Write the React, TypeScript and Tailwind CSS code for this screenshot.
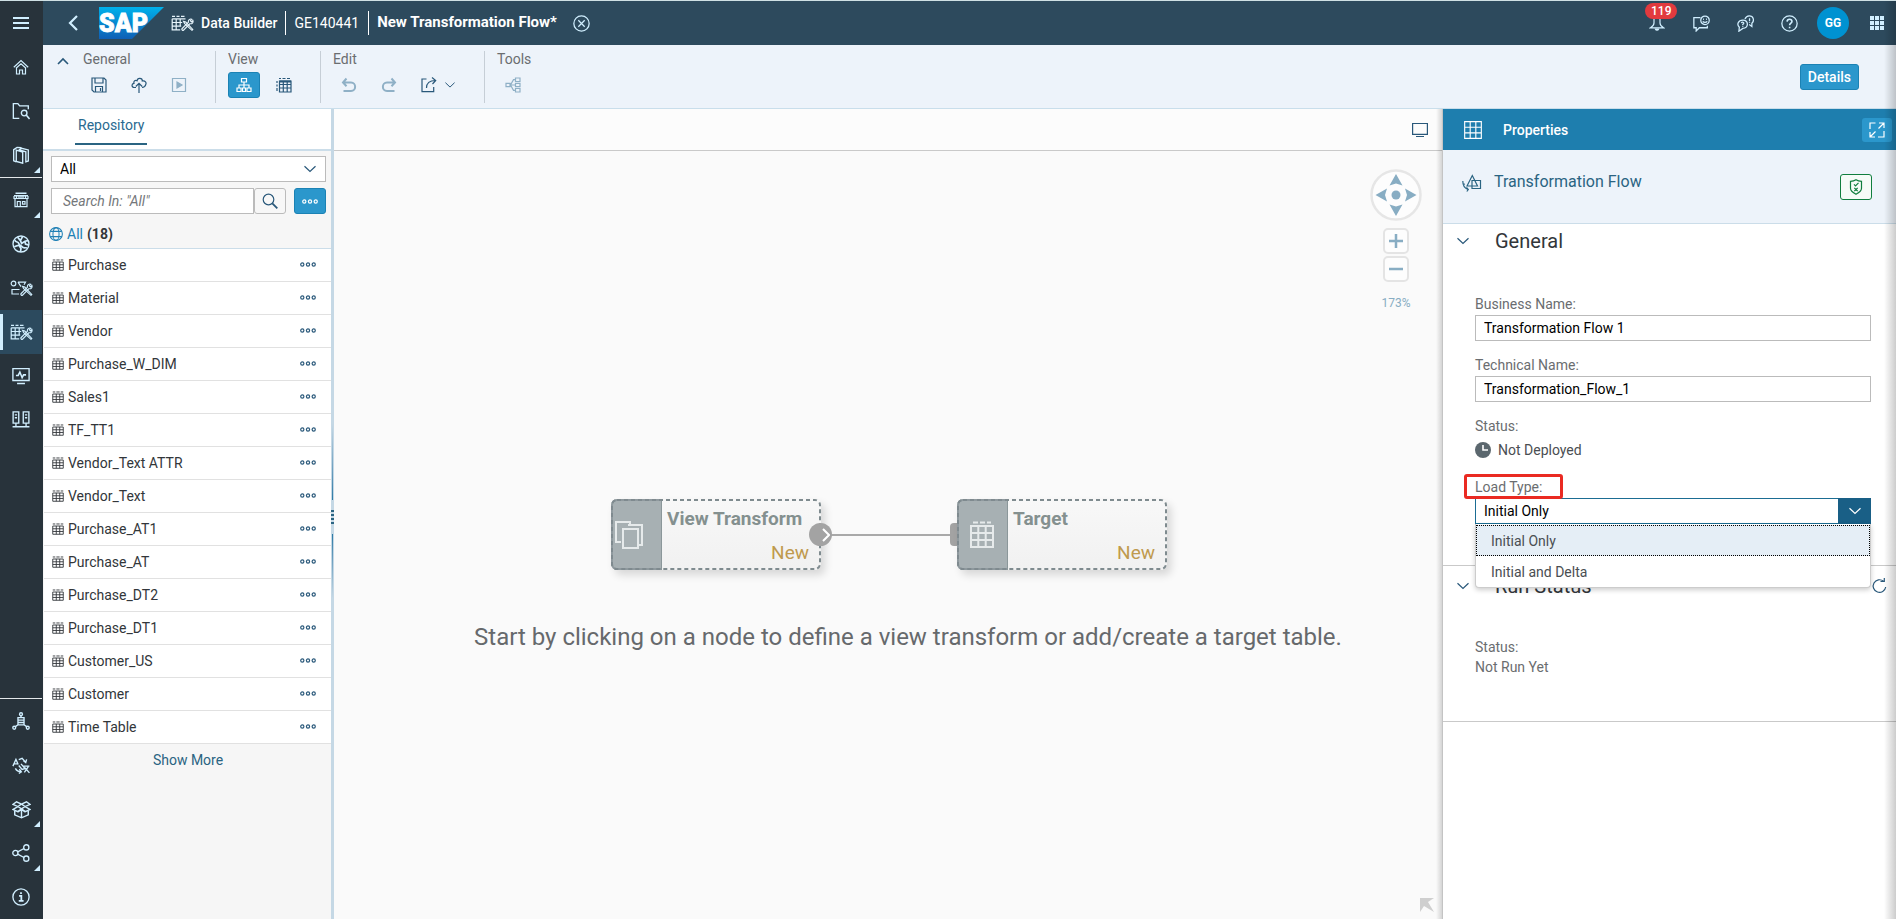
import React, { useState } from "react";

type IconProps = { className?: string; children: React.ReactNode; box?: string };

function Icon({ className = "size-4", children, box = "0 0 16 16" }: IconProps) {
  return (
    <svg
      viewBox={box}
      className={className}
      fill="none"
      stroke="currentColor"
      strokeWidth="1.2"
      aria-hidden="true"
    >
      {children}
    </svg>
  );
}

/* ---------- shared drawings ---------- */

const TableRows = () => (
  <>
    <path d="M1 1.3h3.4M5.800 1.300h4.400M11.600 1.300H15" />
    <path d="M1 4h14v11H1zM1 7.700h14M1 11.300h14M5.700 4v11M10.300 4v11" />
  </>
);

const Tools = () => (
  <>
    <path d="M12.500 6.300l1 2.200 5.300 4.800 2.200 2 .8-.8-2-2.200-5-5.300z" strokeWidth="1.100" />
    <path d="M20.800 4.300a2.400 2.400 0 0 0-3.300 2.900l-6.300 6.300a1 1 0 0 0 1.500 1.500l6.300-6.300a2.400 2.400 0 0 0 2.900-3.200l-1.400 1.400-1.200-1.200z" strokeWidth="1.100" />
  </>
);

const TableTools = () => (
  <>
    <path d="M1 1.300h3M5.500 1.300h3M10 1.300h3.500" />
    <path d="M1.200 3.800v11h8M1.200 3.800h13.300M1.200 7.500h10M1.200 11.200h9M5.200 3.800v11M9.200 3.800v7" />
    <Tools />
  </>
);

const ShapeTools = () => (
  <>
    <circle cx="3.500" cy="3.500" r="2.300" />
    <path d="M9.500 9.500H2V14h7M8 2.200h7.500l-1.500 2.500M8 2.200l3 4.500" />
    <Tools />
  </>
);

const ChevronDown = ({ className = "size-3" }: { className?: string }) => (
  <Icon className={className} box="0 0 12 12">
    <path d="M.5 3.200l5.500 5.300 5.500-5.300" />
  </Icon>
);

const Dots = () => (
  <svg viewBox="0 0 16 5" className="h-[5px] w-4" fill="none" stroke="currentColor" strokeWidth="1.200" aria-hidden="true">
    <circle cx="2.300" cy="2.500" r="1.600" />
    <circle cx="8" cy="2.500" r="1.600" />
    <circle cx="13.700" cy="2.500" r="1.600" />
  </svg>
);

/* ---------- side navigation ---------- */

type NavItem = { label: string; icon: React.ReactNode; more?: boolean; active?: boolean; line?: boolean };

const home = (
  <Icon className="size-4">
    <path d="M.8 8.200L8 1.500l7.200 6.700M3 9.200L8 4.700l5 4.500M3.500 9v6h3v-4h3v4h3V9" />
  </Icon>
);
const folderSearch = (
  <Icon className="size-[18px]">
    <path d="M6.500 14.500H1.200V1.500h4l1.600 2h7.700v3" />
    <circle cx="10.800" cy="9.800" r="2.500" />
    <path d="M12.600 11.600l3 3.400" strokeWidth="1.400" />
  </Icon>
);
const books = (
  <Icon className="size-[18px]">
    <path d="M3.800 14l-2.300-.8V3.200L4.500 1.200l4 .3M3.800 3.700l5.700 1.800v9.800l-5.700-1.600zM6 3.700l2.500-1.700 6 1.500v9.800l-2.200.8V5.200L6.500 3.500" />
  </Icon>
);
const shop = (
  <Icon className="size-4">
    <path d="M2.500 1.200h11M1 3.800h14" strokeWidth="1.500" />
    <path d="M1 4v2.500h2.500V4v2.500H6V4v2.500h2V4v2.500h2V4v2.500h2.500V4v2.500H15V4M2 7v7.700h12V7M4.300 14V9.500h3V14M9.500 9.500H12v2.600H9.500z" />
  </Icon>
);
const globe = (
  <Icon className="size-[18px]">
    <circle cx="8" cy="8" r="7.100" />
    <path d="M2.500 4.500c1 2.500 3 1 3.500 3s2 1.500 3 3 3 .5 4.500 1M5 2l2.500 3M9.500 1.200L7.500 5l1 2.500 3-2 2.800-.5M2 10.500l4-1.500 2 3-.5 3M11.500 5.500l.5 2.500 3 1" strokeWidth="1.500" />
  </Icon>
);
const monitorPulse = (
  <Icon className="size-[18px]">
    <path d="M.8 1.500h14.400v10.500H.8zM4.500 14.700h7" />
    <path d="M3.500 7.500h2l1.500-3 2 5 1.300-2.500h2.200" strokeWidth="1.400" />
  </Icon>
);
const servers = (
  <Icon className="size-[18px]">
    <path d="M1 .8h5v10H1zM10 .8h5v10h-5zM3.500 11v3.500M12.500 11v3.500M.5 14h15" />
    <path d="M2.500 3.500h2M2.500 6h2M11.500 3.500h2M11.500 6h2" />
  </Icon>
);
const network = (
  <Icon className="size-[18px]">
    <circle cx="8" cy="2" r="1.300" />
    <circle cx="2" cy="14" r="1.300" />
    <circle cx="14" cy="14" r="1.300" />
    <path d="M8 3.300v1.500M5.300 5h5.400v6.500H5.300zM5.300 7.200h5.400M5.300 9.300h5.400M5 11.500l-2 1.500M11 11.500l2 1.500" />
  </Icon>
);
const translate = (
  <Icon className="size-[18px]">
    <path d="M.8 9L3.500 3l2 4.500M1.800 7h3M6 3.200l3-1.200 3 3.500M10 4l2.200 1.800L13 3M3 11c1 2 2.500 3 5 3M6.500 11.700L8.300 14l-2.200 1.500M6 8.500l3 3.500 3-1M8 7l4 4.500M10 9h5.500M11 14.500l3.500-5M11.500 10.500l4 4.500" />
  </Icon>
);
const box = (
  <Icon className="size-[19px]">
    <path d="M8 3.500L3.800 1.500.8 3.700 5 5.500zM8 3.500l4.200-2 3 2.200L11 5.500zM8 7.500L5 5.500.8 8l4 1.800zM8 7.500l3-2L15.200 8l-4 1.800zM2.300 9.300v3.200L8 15l5.700-2.500V9.300M8 7.500V15M5 10l3-2M11 10L8 8" />
  </Icon>
);
const share = (
  <Icon className="size-[18px]">
    <circle cx="3" cy="8" r="2.300" />
    <circle cx="12.700" cy="3" r="2.300" />
    <circle cx="12.700" cy="13" r="2.300" />
    <path d="M5 7l5.700-3M5 9l5.700 3" />
  </Icon>
);
const info = (
  <Icon className="size-[18px]">
    <circle cx="8" cy="8" r="7.200" />
    <path d="M6.300 7h2v4.500M6 11.500h4.300M8 3.700v1.700" strokeWidth="1.600" />
  </Icon>
);

const topNav: NavItem[] = [
  { label: "Home", icon: home },
  { label: "Repository Explorer", icon: folderSearch },
  { label: "Catalog", icon: books, more: true },
  { label: "Data Marketplace", icon: shop, more: true, line: true },
  { label: "Semantic Onboarding", icon: globe },
  { label: "Business Builder", icon: <Icon className="h-4 w-[23px]" box="0 0 23 16"><ShapeTools /></Icon> },
  { label: "Data Builder", icon: <Icon className="h-4 w-[23px]" box="0 0 23 16"><TableTools /></Icon>, active: true },
  { label: "Data Integration Monitor", icon: monitorPulse },
  { label: "Connections", icon: servers },
];

const bottomNav: NavItem[] = [
  { label: "Data Access", icon: network, line: true },
  { label: "Translation", icon: translate },
  { label: "Transport", icon: box, more: true },
  { label: "System", icon: share, more: true },
  { label: "About", icon: info },
];

function NavButton({ item }: { item: NavItem }) {
  return (
    <button
      type="button"
      aria-label={item.label}
      className={
        "relative flex w-full items-center justify-center " +
        (item.line ? "h-[45px] border-t border-[#e4e8ea] " : "h-11 ") +
        (item.active ? "bg-[#2c4a5e]" : "")
      }
    >
      {item.active && <span className="absolute inset-y-1 left-0 w-[3px] bg-[#d1efff]" />}
      {item.icon}
      {item.more && (
        <svg viewBox="0 0 6 6" className="absolute right-0.5 bottom-1 size-1.5" aria-hidden="true">
          <path d="M6 0v6H0z" fill="#d1efff" />
        </svg>
      )}
    </button>
  );
}

function SideNav() {
  return (
    <nav className="flex w-[43px] shrink-0 flex-col bg-[#28333b] pr-px text-[#d1efff]">
      <button type="button" aria-label="Menu" className="flex h-11 items-center justify-center">
        <svg viewBox="0 0 16 12" className="h-3 w-4" fill="currentColor" aria-hidden="true">
          <path d="M0 0h16v2H0zM0 5h16v2H0zM0 10h16v2H0z" />
        </svg>
      </button>
      {topNav.map((n) => (
        <NavButton key={n.label} item={n} />
      ))}
      <div className="mt-auto">
        {bottomNav.map((n) => (
          <NavButton key={n.label} item={n} />
        ))}
      </div>
    </nav>
  );
}

/* ---------- shell header ---------- */

function SapLogo() {
  return (
    <svg viewBox="0 0 65 32" className="h-8 w-[65px]" role="img" aria-label="SAP">
      <defs>
        <linearGradient id="sap" x1="0" y1="0" x2="0" y2="1">
          <stop offset="0" stopColor="#00b1eb" />
          <stop offset="1" stopColor="#0f5fb5" />
        </linearGradient>
      </defs>
      <path d="M0 0h65L33 32H0z" fill="url(#sap)" />
      <text x="0" y="25" fontFamily="Roboto, Arial, sans-serif" fontWeight="900" fontSize="25" fill="#fff" stroke="#fff" strokeWidth="0.8">
        SAP
      </text>
    </svg>
  );
}

function Header() {
  return (
    <header className="flex h-11 items-center bg-[#2d4a5d] pl-[25px] text-white">
      <button type="button" aria-label="Back" className="mr-[21px] text-[#d1efff]">
        <svg viewBox="0 0 10 16" className="h-4 w-2.5" fill="none" stroke="currentColor" strokeWidth="2.200" aria-hidden="true">
          <path d="M9 1L2 8l7 7" />
        </svg>
      </button>
      <SapLogo />
      <Icon className="ml-[7px] h-4 w-[23px] text-[#e6f4fb]" box="0 0 23 16">
        <TableTools />
      </Icon>
      <nav className="flex items-center text-sm font-medium whitespace-nowrap">
        <a href="#builder" className="pl-[7px]">Data Builder</a>
        <span className="mx-2 h-6 w-px bg-white" />
        <a href="#space" className="font-normal">GE140441</a>
        <span className="mr-2 ml-[9px] h-6 w-px bg-white" />
        <span className="text-[15px] font-bold">New Transformation Flow*</span>
      </nav>
      <button type="button" aria-label="Close" className="ml-4 text-[#d1efff]">
        <Icon className="size-[17px]">
          <circle cx="8" cy="8" r="7.200" />
          <path d="M5 5l6 6M11 5l-6 6" />
        </Icon>
      </button>
      <div className="ml-auto flex text-[#d1efff]">
        <button type="button" aria-label="Notifications, 119" className="relative flex h-11 w-11 items-center justify-center">
          <Icon className="size-4">
            <path d="M5 3v5c0 2-1.500 3.500-3.500 4.800h13C12.500 11.500 11 10 11 8V3M5 3c1-2 5-2 6 0" />
            <path d="M6.500 14.200c.5 1.200 2.500 1.200 3 0z" fill="currentColor" />
          </Icon>
          <span className="absolute top-0.5 left-[10px] rounded-full bg-[#e23a3e] px-1.5 text-xs leading-4 font-medium text-white">119</span>
        </button>
        <button type="button" aria-label="Feedback" className="flex h-11 w-11 items-center justify-center">
          <Icon className="size-[17px]">
            <path d="M7 2.500H.8v9.500H3v3l3-3h7.500v-2" />
            <circle cx="11.300" cy="5" r="4" />
            <path d="M9.500 4h.8M12.300 4h.8M9.200 6c.8 1.300 3.400 1.300 4.200 0" />
          </Icon>
        </button>
        <button type="button" aria-label="Guided help" className="flex h-11 w-11 items-center justify-center">
          <Icon className="size-[17px]">
            <path d="M7.500 3.800C8.300 1.800 9.800.800 11.500.800c4.200 0 5 4.800 2.500 7v3L11.500 9" />
            <path d="M5.500 4.800c5.700 0 5.700 7.800 0 7.800L1.800 15.200l.4-3.700C-.5 9 1 4.800 5.500 4.800z" />
            <path d="M4.200 7.700c.3-1.500 2.800-1 2 .5l-.8.800v.7M5.400 10.500v.8M11.800 3v2.800M11.800 6.600v.8" />
          </Icon>
        </button>
        <button type="button" aria-label="Help" className="flex h-11 w-11 items-center justify-center">
          <Icon className="size-[17px]">
            <circle cx="8" cy="8" r="7.200" />
            <path d="M5.700 6.200c.2-3 4.800-2.800 4.600 0-.1 1.500-2.200 1.500-2.200 3.500M8.100 11v1.500" strokeWidth="1.500" />
          </Icon>
        </button>
        <button type="button" aria-label="Profile" className="flex h-11 w-11 items-center justify-center">
          <span className="flex size-8 items-center justify-center rounded-full bg-[#0092d1] text-xs font-bold text-white">GG</span>
        </button>
        <button type="button" aria-label="Product switch" className="flex h-11 w-[41px] items-center justify-center pl-[3px]">
          <svg viewBox="0 0 14 14" className="size-3.5" fill="currentColor" aria-hidden="true">
            <path d="M0 0h4v4H0zM5 0h4v4H5zM10 0h4v4h-4zM0 5h4v4H0zM5 5h4v4H5zM10 5h4v4h-4zM0 10h4v4H0zM5 10h4v4H5zM10 10h4v4h-4z" />
          </svg>
        </button>
      </div>
    </header>
  );
}

/* ---------- toolbar ---------- */

type ToolProps = { label: string; children: React.ReactNode; disabled?: boolean; active?: boolean };

function Tool({ label, children, disabled, active }: ToolProps) {
  return (
    <button
      type="button"
      aria-label={label}
      disabled={disabled}
      className={
        "flex h-[26px] w-8 items-center justify-center rounded-[3px] " +
        (active
          ? "border border-[#1b82b4] bg-[#2b97cc] text-white"
          : disabled
            ? "text-[#8fb0c6]"
            : "text-[#29587a]")
      }
    >
      <Icon className="size-4">{children}</Icon>
    </button>
  );
}

function ToolGroup({ title, children, last }: { title: string; children: React.ReactNode; last?: boolean }) {
  return (
    <section className={"h-[52px] pl-3 " + (last ? "" : "border-r border-[#c6ced6]")}>
      <h2 className="mb-[5px] text-sm leading-4 text-[#6a6d70]">{title}</h2>
      <div className="flex gap-2">{children}</div>
    </section>
  );
}

function Toolbar() {
  return (
    <div className="flex h-16 items-center border-b border-[#c9deeb] bg-[#edf3fa] pr-[37px]">
      <button type="button" aria-label="Collapse toolbar" className="mr-0.5 mb-[31px] ml-[14px] text-[#29587a]">
        <Icon className="size-3" box="0 0 12 12">
          <path d="M1 9l5-5 5 5" strokeWidth="1.600" />
        </Icon>
      </button>
      <div className="flex">
        <ToolGroup title="General">
          <div className="flex gap-2 pr-5">
            <Tool label="Save">
              <path d="M1 1h12l2 2v12H3L1 13zM4 1v5h8V1M4.500 15v-5.500h7V15M9.500 11v3" />
            </Tool>
            <Tool label="Deploy">
              <path d="M5 10.500H3.500C.3 10.500.3 6.500 3 6.300 2.300 4 4.500 2.800 6 3.800c.5-3.500 5.500-3 5.300.2 3-.5 4.300 1.500 3.500 3.300-.5 2.200-1.500 3-3.800 3.200M8 16V6.500M4.800 9.500L8 6.300l3.200 3.200" />
            </Tool>
            <Tool label="Run" disabled>
              <path d="M1.500 1.500h13v13h-13z" />
              <path d="M6 5v6l5-3z" fill="currentColor" />
            </Tool>
          </div>
        </ToolGroup>
        <ToolGroup title="View">
          <div className="flex gap-2 pr-5">
            <Tool label="Graphical view" active>
              <path d="M5.500 1.500h5V5h-5zM1 11h4v3.500H1zM6.500 11h3v3.500h-3zM11 11h4v3.500h-4zM8 5v6M3 11V8h10v3" />
            </Tool>
            <Tool label="Data preview">
              <path d="M3 1.500h2M6.500 1.500h3M11 1.500h3M1 4v2M1 7.500v2M1 11v3" />
              <path d="M3.500 4h11.500v11H3.500zM3.500 7.500H15M3.500 11H15M7.300 4v11M11.200 4v11" />
              <path d="M3.500 4.500H15" strokeWidth="2" />
            </Tool>
          </div>
        </ToolGroup>
        <ToolGroup title="Edit">
          <div className="flex gap-2 pr-[29px]">
            <Tool label="Undo" disabled>
              <path d="M5.500 1.500L2 5.500l3.500 3.800M2 5.500h8c5.500 0 5.500 8.500 0 8.500H2.500" strokeWidth="2" />
            </Tool>
            <Tool label="Redo" disabled>
              <path d="M10.500 1.500l3.500 4-3.500 3.800M14 5.500H6c-5.500 0-5.500 8.500 0 8.500h7.500" strokeWidth="2" />
            </Tool>
            <button type="button" aria-label="Export" className="flex h-[26px] items-center gap-2 pl-2 text-[#29587a]">
              <Icon className="size-4">
                <path d="M5.500 2H1v12.700h11.700V10M5.500 11c0-5 3-7.500 9-7.500M11 .5l3.700 3L11.500 7" />
              </Icon>
              <ChevronDown className="size-2.5" />
            </button>
          </div>
        </ToolGroup>
        <ToolGroup title="Tools" last>
          <Tool label="Impact and lineage" disabled>
            <path d="M1 6.300h4v3.400H1zM10.500 1h4.500v3.500h-4.500zM10.500 6.300H15v3.400h-4.500zM10.500 11.500H15V15h-4.500zM5 8h5.500M5.500 8l3-5.300h2M5.500 8l3 5.300h2" />
          </Tool>
        </ToolGroup>
      </div>
      <button type="button" className="ml-auto h-[26px] rounded-[3px] border border-[#1b82b4] bg-[#2b97cc] px-[7px] text-sm leading-none font-medium text-white">
        Details
      </button>
    </div>
  );
}

/* ---------- repository panel ---------- */

const objects = [
  "Purchase", "Material", "Vendor", "Purchase_W_DIM", "Sales1", "TF_TT1", "Vendor_Text ATTR", "Vendor_Text",
  "Purchase_AT1", "Purchase_AT", "Purchase_DT2", "Purchase_DT1", "Customer_US", "Customer", "Time Table",
];

function Repository() {
  return (
    <aside className="w-[288px] shrink-0 bg-[#f6f6f6]">
      <div className="h-[42px] border-b-2 border-[#cbdde9] bg-white pl-8">
        <button type="button" className="h-9 border-b-2 border-[#2a6482] px-[3px] pb-0.5 text-sm text-[#2a6a90]">
          Repository
        </button>
      </div>
      <div className="px-2 pt-[5px] pr-[5px]">
        <div className="relative">
          <select aria-label="Object type" className="block h-[26px] w-full appearance-none border border-[#bbb] bg-white px-2 text-sm text-black">
            <option>All</option>
          </select>
          <span className="pointer-events-none absolute top-[7px] right-2.5 text-[#29587a]">
            <ChevronDown />
          </span>
        </div>
        <div className="mt-1.5 flex">
          <input
            type="search"
            aria-label="Search In: All"
            placeholder={'Search In: "All"'}
            className="h-[26px] min-w-0 flex-1 border border-[#bbb] bg-white px-[11px] text-sm placeholder:text-[#74777a] placeholder:italic"
          />
          <button type="button" aria-label="Search" className="flex h-[26px] w-8 items-center justify-center rounded-[3px] border border-[#bbb] bg-[#f7f7f7] text-[#29587a]">
            <Icon className="size-4">
              <circle cx="6.500" cy="6.500" r="5.300" />
              <path d="M10.300 10.300l5 5" strokeWidth="1.800" />
            </Icon>
          </button>
          <button type="button" aria-label="More search options" className="ml-2 flex h-[26px] w-8 items-center justify-center rounded-[3px] border border-[#1b82b4] bg-[#2b97cc] text-white">
            <Dots />
          </button>
        </div>
      </div>
      <div className="flex h-[34px] items-center gap-1 pt-1.5 pl-1.5 text-sm">
        <Icon className="size-3.5 text-[#2080b5]">
          <circle cx="8" cy="8" r="7.300" />
          <ellipse cx="8" cy="8" rx="3.500" ry="7.300" />
          <path d="M1.500 5h13M1.500 11h13" />
        </Icon>
        <a href="#all" className="text-[#2080b5]">All</a>
        <span className="font-bold text-[#32363a]">(18)</span>
      </div>
      <ul className="ml-px border-t border-[#cbdde9] bg-white">
        {objects.map((o) => (
          <li key={o} className="flex h-[33px] items-center border-b border-[#e1e1e1] pr-[15px] pb-px pl-2 text-sm text-[#32363a]">
            <Icon className="mr-1 size-3">
              <TableRows />
            </Icon>
            {o}
            <button type="button" aria-label={"Actions for " + o} className="ml-auto text-[#29587a]">
              <Dots />
            </button>
          </li>
        ))}
      </ul>
      <button type="button" className="block w-full py-1.5 pl-0.5 text-center text-sm text-[#2a6482]">
        Show More
      </button>
    </aside>
  );
}

function Splitter() {
  return (
    <div className="flex w-[3px] shrink-0 flex-col items-center bg-[#c5d8e5] pt-[315px]">
      <span className="h-[76px] w-px bg-gradient-to-b from-[#c5d8e5] to-[#2a7aa5]" />
      <span className="my-2.5 flex flex-col gap-0.5">
        <i className="h-0.5 w-[3px] bg-[#2a6482]" />
        <i className="h-0.5 w-[3px] bg-[#2a6482]" />
        <i className="h-0.5 w-[3px] bg-[#2a6482]" />
        <i className="h-0.5 w-[3px] bg-[#2a6482]" />
      </span>
      <span className="h-16 w-px bg-gradient-to-t from-[#c5d8e5] to-[#2a7aa5]" />
    </div>
  );
}

/* ---------- diagram ---------- */

function FlowNode({ title, icon }: { title: string; icon: React.ReactNode }) {
  return (
    <div className="relative flex h-[71px] w-[210px] rounded-md bg-gradient-to-b from-[#f8f8f8] to-[#f1f1f1] shadow-[4px_5px_9px_rgba(0,0,0,0.14)]">
      <div className="flex w-[51px] items-center rounded-l-md border-r border-[#8b979a] bg-[#a7b0b3] text-[#e6eaeb]">
        {icon}
      </div>
      <div className="flex flex-1 flex-col justify-between pt-2 pr-3 pb-[5px] pl-[5px]">
        <span className="text-[19px] leading-6 font-bold whitespace-nowrap text-[#84908f]">{title}</span>
        <span className="text-right text-[19px] leading-6 text-[#bf9a4e]">New</span>
      </div>
      <svg className="pointer-events-none absolute inset-0 size-full" fill="none" aria-hidden="true">
        <rect x="1" y="1" width="208" height="69" rx="5" stroke="#7f8b8f" strokeWidth="2" strokeDasharray="4 3" />
        <path d="M50 1H6a5 5 0 0 0-5 5v59a5 5 0 0 0 5 5h44" stroke="#7f8b8f" strokeWidth="2" strokeOpacity="0.6" />
      </svg>
    </div>
  );
}

function Canvas() {
  return (
    <main className="relative flex min-w-0 flex-1 flex-col bg-[#fafafa]">
      <div className="flex h-[42px] items-center justify-end border-b border-[#c9c9c9] bg-[#fcfcfc] pr-[14px]">
        <button type="button" aria-label="Full screen" className="text-[#29587a]">
          <Icon className="size-4">
            <path d="M.6 1.500h14.800v10.800H.6zM4 14.500h8" />
          </Icon>
        </button>
      </div>
      <div className="flex flex-1 flex-col items-center pt-[348px]">
        <div className="flex items-center pl-0.5">
          <FlowNode
            title="View Transform"
            icon={
              <svg viewBox="0 0 30 30" className="ml-[3px] size-[30px]" fill="none" stroke="currentColor" strokeWidth="2" aria-hidden="true">
                <path d="M7 22H2V2h14v3M14 5h14v20h-4M9 9h15v19H9z" />
              </svg>
            }
          />
          <div className="relative h-px w-[136px]">
            <span className="absolute top-0 left-0 h-0.5 w-full bg-[#a9a9a9]" />
            <span className="absolute -top-[11px] -left-3 flex size-[23px] items-center justify-end rounded-full bg-[#a3a3a3] pr-0.5">
              <svg viewBox="0 0 8 14" className="h-3.5 w-2" fill="none" stroke="#fff" strokeWidth="2" aria-hidden="true">
                <path d="M1 1l6 6-6 6" />
              </svg>
            </span>
            <span className="absolute -top-[11px] right-0 h-[23px] w-[7px] rounded-l-sm bg-[#a3a3a3]" />
          </div>
          <FlowNode
            title="Target"
            icon={
              <svg viewBox="0 0 24 28" className="ml-[13px] h-7 w-6" fill="none" stroke="currentColor" strokeWidth="2" aria-hidden="true">
                <path d="M3 1.500h5M10 1.500h5M17 1.500h4M1 5h22v21H1zM1 12h22M1 19h22M8.300 5v21M15.700 5v21" />
              </svg>
            }
          />
        </div>
        <p className="mt-[51px] pl-10 text-2xl text-[#66696c]">
          Start by clicking on a node to define a view transform or add/create a target table.
        </p>
      </div>

      <div className="absolute top-[60px] right-5 flex w-[52px] flex-col items-center text-[#88adc3]">
        <button type="button" aria-label="Pan" className="size-[52px]">
          <svg viewBox="0 0 52 52" className="size-full" aria-hidden="true">
            <circle cx="26" cy="26" r="24.500" fill="#fdfdfd" stroke="#e6e6e6" strokeWidth="2.500" />
            <path d="M26 5l6.500 11.500-6.500-2-6.500 2zM26 47l6.500-11.500-6.500 2-6.500-2zM5.500 26L17 19.500l-2 6.500 2 6.500zM46.500 26L35 19.500l2 6.500-2 6.500z" fill="currentColor" />
            <circle cx="26" cy="26" r="4.500" fill="currentColor" />
          </svg>
        </button>
        <button type="button" aria-label="Zoom in" className="mt-[7px] flex size-[26px] items-center justify-center rounded-[5px] border-2 border-[#e4e4e4] bg-[#fdfdfd]">
          <svg viewBox="0 0 14 14" className="size-3.5" stroke="currentColor" strokeWidth="2.500" aria-hidden="true">
            <path d="M7 0v14M0 7h14" />
          </svg>
        </button>
        <button type="button" aria-label="Zoom out" className="mt-0.5 flex size-[26px] items-center justify-center rounded-[5px] border-2 border-[#e4e4e4] bg-[#fdfdfd]">
          <svg viewBox="0 0 14 14" className="size-3.5" stroke="currentColor" strokeWidth="2.500" aria-hidden="true">
            <path d="M0 7h14" />
          </svg>
        </button>
        <span className="mt-[13px] text-xs leading-4">173%</span>
      </div>

      <svg viewBox="0 0 14 14" className="absolute right-2 bottom-[7px] size-3.5" fill="#cfcfcf" aria-hidden="true">
        <path d="M0 0h14L8 4l6 10-10-6-4 6z" />
      </svg>
      <div className="pointer-events-none absolute inset-y-0 right-0 w-1.5 bg-gradient-to-r from-transparent to-black/15" />
    </main>
  );
}

/* ---------- properties panel ---------- */

function Field({ id, label, value }: { id: string; label: string; value: string }) {
  return (
    <div className="mb-[13px]">
      <label htmlFor={id} className="block text-sm leading-[22px] text-[#6a6d70]">{label}</label>
      <input id={id} defaultValue={value} className="block h-[26px] w-full border border-[#bbb] bg-white px-2 text-sm text-black" />
    </div>
  );
}

function Properties() {
  const [load, setLoad] = useState("Initial Only");
  const options = ["Initial Only", "Initial and Delta"];
  return (
    <aside className="w-[454px] shrink-0 border-l border-[#c4c4c4] bg-white">
      <div className="flex h-[41px] items-center bg-[#1e7eae] pr-1 pl-[21px] text-white">
        <Icon className="size-[18px]">
          <path d="M.6.600h14.800v14.800H.6zM.6 5.500h14.800M.6 10.500h14.800M5.500.6v14.800M10.500.6v14.800" strokeWidth="1" />
        </Icon>
        <h2 className="ml-[21px] text-sm font-medium">Properties</h2>
        <button type="button" aria-label="Expand" className="ml-auto flex h-6 w-[30px] items-center justify-center rounded-[3px] bg-[#2b97cc]">
          <Icon className="size-4">
            <path d="M6.500 1H1v6M15 9v6H9M9.500 6.500L15 1M10 1h5v5M6.500 9.500L1 15M1 10v5h5" />
          </Icon>
        </button>
      </div>
      <div className="flex h-[74px] border-b border-[#cbdde9] bg-[#edf3fa] pl-[19px] text-[#2a6482]">
        <Icon className="mt-6 h-[18px] w-5" box="0 0 20 18">
          <path d="M5 12l5.300-10.500L15.500 12zM10 6.500h8.500v8H10zM.8 7c0 4.500 1.500 7 5 8.500M4.800 17.500l1.500-2L4.500 13.300M1 10.500l2-.5" />
        </Icon>
        <h3 className="mt-5 ml-3 text-base">Transformation Flow</h3>
        <button type="button" aria-label="Validation messages" className="mt-6 mr-6 ml-auto flex h-[26px] w-8 items-center justify-center rounded-[3px] border border-[#107e3e] bg-[#f5fbf7] text-[#107e3e]">
          <Icon className="size-4">
            <path d="M8 .8c1.500 1 3.500 1.500 5.500 1.500v7c0 3-3 4.700-5.500 6-2.500-1.300-5.500-3-5.500-6v-7C4.500 2.300 6.500 1.800 8 .8zM6 5.300l1.500 1.500L10.500 3.800M6.300 8.800l3.400 3.400M9.700 8.800l-3.400 3.400" />
          </Icon>
        </button>
      </div>

      <section className="border-b border-[#c9c9c9]">
        <div className="flex items-center pt-[3px] pl-[14px]">
          <button type="button" aria-label="Collapse General" className="text-[#29587a]"><ChevronDown /></button>
          <h3 className="ml-[26px] text-xl leading-7 text-[#32363a]">General</h3>
        </div>
        <div className="pt-[38px] pr-[25px] pb-[41px] pl-8">
          <Field id="business" label="Business Name:" value="Transformation Flow 1" />
          <Field id="technical" label="Technical Name:" value="Transformation_Flow_1" />
          <div className="mb-[13px]">
            <p className="text-sm leading-[22px] text-[#6a6d70]">Status:</p>
            <p className="flex h-[26px] items-center gap-[7px] text-sm text-[#4a4e52]">
              <svg viewBox="0 0 16 16" className="size-4" aria-hidden="true">
                <circle cx="8" cy="8" r="8" fill="#5b676e" />
                <path d="M8 3v5h5" fill="none" stroke="#fff" strokeWidth="1.600" />
              </svg>
              Not Deployed
            </p>
          </div>
          <div className="relative">
            <label htmlFor="load" className="relative block text-sm leading-[22px] text-[#6a6d70]">
              Load Type:
              <span className="pointer-events-none absolute -top-0.5 -left-[11px] z-20 h-[25px] w-[99px] rounded-[3px] border-[3px] border-[#ea2a22]" />
            </label>
            <div className="relative">
              <select
                id="load"
                value={load}
                onChange={(e) => setLoad(e.target.value)}
                className="block h-[26px] w-full appearance-none border border-[#1b6d93] bg-white px-2 text-sm text-black"
              >
                {options.map((o) => (
                  <option key={o}>{o}</option>
                ))}
              </select>
              <span className="pointer-events-none absolute inset-y-0 right-0 flex w-[33px] items-center justify-center bg-[#195f86] text-white">
                <ChevronDown />
              </span>
            </div>
            <ul role="listbox" aria-label="Load Type" className="absolute inset-x-0 top-full z-10 rounded-b-sm border border-t-0 border-[#ccc] bg-white pt-px text-sm text-[#4a4e52] shadow-[0_2px_5px_rgba(0,0,0,0.2)]">
              {options.map((o) => (
                <li
                  key={o}
                  role="option"
                  aria-selected={o === load}
                  onClick={() => setLoad(o)}
                  className={
                    "flex h-[31px] items-center border border-dotted px-[14px] " +
                    (o === load ? "border-black bg-[#e5eef6]" : "border-transparent")
                  }
                >
                  {o}
                </li>
              ))}
            </ul>
          </div>
        </div>
      </section>

      <section className="border-b border-[#c9c9c9]">
        <div className="flex items-center pt-1.5 pr-[9px] pl-[14px]">
          <button type="button" aria-label="Collapse Run Status" className="text-[#29587a]"><ChevronDown /></button>
          <h3 className="ml-[26px] text-xl leading-7 text-[#32363a]">Run Status</h3>
          <button type="button" aria-label="Refresh" className="ml-auto text-[#29587a]">
            <Icon className="size-4">
              <path d="M12.500 3.200A6.300 6.300 0 1 0 14.700 9M9.500 3.500h3.800V0" />
            </Icon>
          </button>
        </div>
        <div className="pt-[37px] pb-11 pl-8 text-sm text-[#6a6d70]">
          <p>Status:</p>
          <p>Not Run Yet</p>
        </div>
      </section>
    </aside>
  );
}

export default function App() {
  return (
    <div className="relative flex min-h-screen border-t border-[#cfe0e4] bg-white font-[Roboto,'Noto_Sans',sans-serif]">
      <SideNav />
      <div className="flex min-w-0 flex-1 flex-col">
        <Header />
        <Toolbar />
        <div className="flex flex-1">
          <Repository />
          <Splitter />
          <Canvas />
          <Properties />
        </div>
      </div>
      <div className="pointer-events-none absolute inset-y-0 right-0 w-3 bg-gradient-to-r from-transparent to-black/20" />
    </div>
  );
}
